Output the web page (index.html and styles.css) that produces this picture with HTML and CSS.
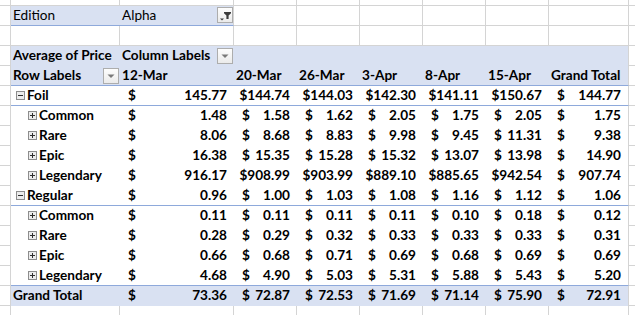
FILE: index.html
```html
<!DOCTYPE html>
<html lang="en">
    <head>
        <meta charset="UTF-8" />
        <meta name="viewport" content="width=device-width, initial-scale=1.0" />
        <title>Average of Price by Edition</title>
        <link rel="stylesheet" href="styles.css">
    </head>
    <body>
        <div class="sheet" id="sheet">
            <!-- report filter -->
            <div class="g"></div>
            <div class="pv bb txt plain">Edition</div>
            <div class="pv bb txt plain line btn-cell">
                <span>Alpha</span>
                <span class="btn filter">
                    <svg width="14" height="14" viewBox="0 0 14 14">
                        <path d="M6 4H13V5.2L10.6 7.6V11H8.4V7.6L6 5.2Z" fill="#3c3c3c" />
                        <path d="M2 10.5H6L4 12.5Z" fill="#3c3c3c" />
                    </svg>
                </span>
            </div>
            <div class="g"></div>
            <div class="g"></div>
            <div class="g"></div>
            <div class="g"></div>
            <div class="g"></div>
            <div class="g"></div>
            <div class="g end"></div>
        </div>

        <script>
            document.addEventListener("DOMContentLoaded", function () {
                const sheet = document.getElementById("sheet");

                const dates = ["12-Mar", "20-Mar", "26-Mar", "3-Apr", "8-Apr", "15-Apr", "Grand Total"];

                const rows = [
                    { label: "Foil", level: 0, values: ["145.77", "144.74", "144.03", "142.30", "141.11", "150.67", "144.77"], line: true },
                    { label: "Common", level: 1, values: ["1.48", "1.58", "1.62", "2.05", "1.75", "2.05", "1.75"] },
                    { label: "Rare", level: 1, values: ["8.06", "8.68", "8.83", "9.98", "9.45", "11.31", "9.38"] },
                    { label: "Epic", level: 1, values: ["16.38", "15.35", "15.28", "15.32", "13.07", "13.98", "14.90"] },
                    { label: "Legendary", level: 1, values: ["916.17", "908.99", "903.99", "889.10", "885.65", "942.54", "907.74"] },
                    { label: "Regular", level: 0, values: ["0.96", "1.00", "1.03", "1.08", "1.16", "1.12", "1.06"], line: true },
                    { label: "Common", level: 1, values: ["0.11", "0.11", "0.11", "0.11", "0.10", "0.18", "0.12"] },
                    { label: "Rare", level: 1, values: ["0.28", "0.29", "0.32", "0.33", "0.33", "0.33", "0.31"] },
                    { label: "Epic", level: 1, values: ["0.66", "0.68", "0.71", "0.69", "0.68", "0.69", "0.69"] },
                    { label: "Legendary", level: 1, values: ["4.68", "4.90", "5.03", "5.31", "5.88", "5.43", "5.20"], line: true },
                    { label: "Grand Total", level: -1, values: ["73.36", "72.87", "72.53", "71.69", "71.14", "75.90", "72.91"], total: true }
                ];

                const dropdown =
                    '<span class="btn"><svg width="14" height="14" viewBox="0 0 14 14"><path d="M3.5 5.5H10.5L7 9Z" fill="#7a7a7a"/></svg></span>';

                function toggle(open) {
                    const mark = open ? "M2 4.5H7" : "M2 4.5H7M4.5 2V7";
                    return `<svg class="tg" width="9" height="9" viewBox="0 0 9 9"><rect x=".5" y=".5" width="8" height="8" fill="#ececec" stroke="#8d8d8d"/><path d="${mark}" stroke="#2e2e2e"/></svg>`;
                }

                function blankRow() {
                    return '<div class="g"></div>'.repeat(9) + '<div class="g end"></div>';
                }

                // Grid rows above the table
                sheet.insertAdjacentHTML("afterbegin", blankRow());

                let html = blankRow();

                // Data field and column labels
                html += '<div class="g"></div>';
                html += '<div class="pv txt">Average of Price</div>';
                html += `<div class="pv txt btn-cell"><span>Column Labels</span>${dropdown}</div>`;
                html += '<div class="pv"></div>'.repeat(5);
                html += '<div class="pv line"></div>';
                html += '<div class="g end"></div>';

                html += '<div class="g"></div>';
                html += `<div class="pv bb txt btn-cell"><span>Row Labels</span>${dropdown}</div>`;
                dates.forEach(function (date, i) {
                    const last = i === dates.length - 1 ? " line" : "";
                    html += `<div class="pv bb txt${last}">${date}</div>`;
                });
                html += '<div class="g end"></div>';

                // Pivot body
                rows.forEach(function (row) {
                    const fill = row.total ? "pv" : "w";
                    const border = row.line ? " bb" : "";
                    let label = row.label;
                    if (row.level >= 0) {
                        label = toggle(row.level === 0) + row.label;
                    }

                    html += '<div class="g"></div>';
                    html += `<div class="${fill}${border} lbl l${row.level}">${label}</div>`;
                    row.values.forEach(function (value, i) {
                        const last = i === row.values.length - 1 ? " line" : "";
                        html += `<div class="${fill}${border} num${last}"><span class="cur">$</span><span>${value}</span></div>`;
                    });
                    html += '<div class="g end"></div>';
                });

                html += blankRow();
                sheet.insertAdjacentHTML("beforeend", html);
            });
        </script>
    </body>
</html>
```

FILE: styles.css
```css
body {
    margin: 0;
    background-color: white;
    font-family: Lato, "Liberation Sans", sans-serif;
    font-size: 13.6px;
    font-weight: bold;
    color: #000;
    overflow: hidden;
}
.sheet {
    display: grid;
    grid-template-columns: 11px 109px 114px repeat(5, 63px) 80px 1fr;
    grid-template-rows: 6px repeat(15, 20px) 10px;
    width: 635px;
    height: 315px;
    overflow: hidden;
}
.sheet > div {
    box-sizing: border-box;
    min-width: 0;
    line-height: 19px;
    white-space: nowrap;
}
.g {
    border-right: 1px solid #d4d4d4;
    border-bottom: 1px solid #d4d4d4;
}
.g.end {
    border-right: none;
}
.pv {
    background-color: #d9e1f2;
}
.w {
    background-color: white;
}
.bb {
    border-bottom: 1px solid #8ea9db;
}
.line {
    border-right: 1px solid #d4d4d4;
}
.txt {
    padding-left: 2px;
}
.plain {
    font-weight: normal;
}
.btn-cell {
    display: flex;
    align-items: flex-start;
}
.btn {
    flex: none;
    width: 16px;
    height: 16px;
    box-sizing: border-box;
    margin: 2px 1px 0 auto;
    border: 1px solid #adadad;
    background: linear-gradient(#fdfdfd, #ebebeb);
}
.btn svg {
    display: block;
}
.btn.filter {
    margin: 1px 0 0 auto;
}
.lbl {
    padding-left: 2px;
}
.lbl.l0 {
    padding-left: 5px;
}
.lbl.l1 {
    padding-left: 17px;
}
.tg {
    vertical-align: baseline;
    margin-right: 2px;
}
.num {
    display: flex;
    padding-right: 7px;
}
.num::before {
    content: "";
    flex: 0 1 8px;
    min-width: 0;
}
.cur {
    margin-right: auto;
}
```
